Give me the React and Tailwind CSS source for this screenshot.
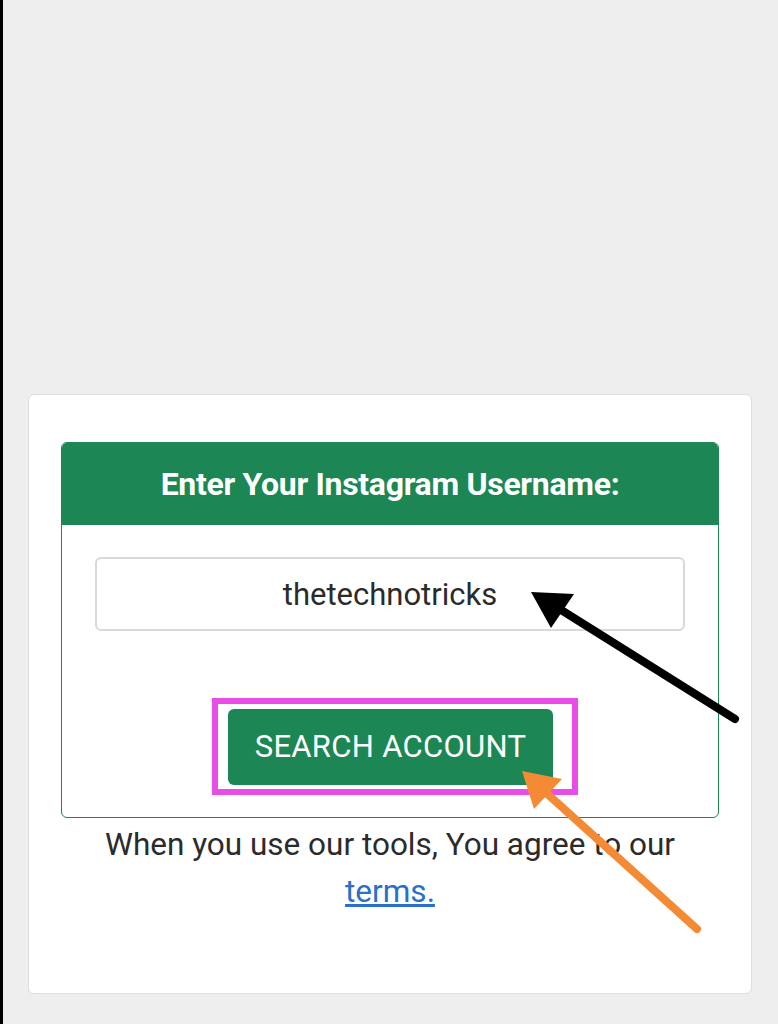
import React from 'react';

const Arrows = () => (
    <svg className="absolute inset-0 pointer-events-none" width="778" height="1024" viewBox="0 0 778 1024">
        {/* black arrow pointing at the input */}
        <line x1="732" y1="719" x2="555" y2="608" stroke="#000" strokeWidth="8" strokeLinecap="round" />
        <polygon points="528,592 571,594 548,628" fill="#000" />
        {/* orange arrow pointing at the button */}
        <line x1="694" y1="929" x2="540" y2="790" stroke="#f58a35" strokeWidth="8" strokeLinecap="round" />
        <polygon points="519,771 559,779 531,809" fill="#f58a35" />
    </svg>
);

const App = () => {
    return (
        <div
            className="relative min-h-[1024px] w-[778px] bg-[#eeeeee] border-l-[3px] border-black pt-[394px] pl-[25px] pr-[26px] pb-[31px]"
            style={{ fontFamily: 'Roboto, "Liberation Sans", sans-serif' }}
        >
            <div className="bg-white border border-[#dddddd] rounded-md px-8 pt-[47px] pb-[78px]">
                <div className="rounded-md border-[1.5px] border-[#1d8754] overflow-hidden">
                    <div className="bg-[#1c8754] h-[82px] flex items-center justify-center">
                        <h2 className="text-white text-[32px] font-bold tracking-[-0.3px]">Enter Your Instagram Username:</h2>
                    </div>
                    <div className="px-[33px] pt-[32px] pb-[22px] flex flex-col items-center">
                        <input
                            type="text"
                            defaultValue="thetechnotricks"
                            className="w-full h-[74px] rounded-md border-2 border-[#d9d9d9] text-center text-[31px] text-[#2b2b2b] outline-none"
                        />
                        <div className="mt-[67px] ml-[10px] border-[6px] border-[#e84de6] pl-[10px] pr-[19px] pt-[5px] pb-[4px]">
                            <button className="bg-[#1c8754] text-white text-[31px] rounded-md w-[325px] h-[76px] tracking-[0.3px]">
                                SEARCH ACCOUNT
                            </button>
                        </div>
                    </div>
                </div>
                <p className="text-center text-[31.5px] text-[#2b2b2b] leading-[47px] mt-[3px]">
                    When you use our tools, You agree to our
                    <br />
                    <a href="#" className="text-[#2a6fc9] underline">terms.</a>
                </p>
            </div>
            <Arrows />
        </div>
    );
};

export default App;
